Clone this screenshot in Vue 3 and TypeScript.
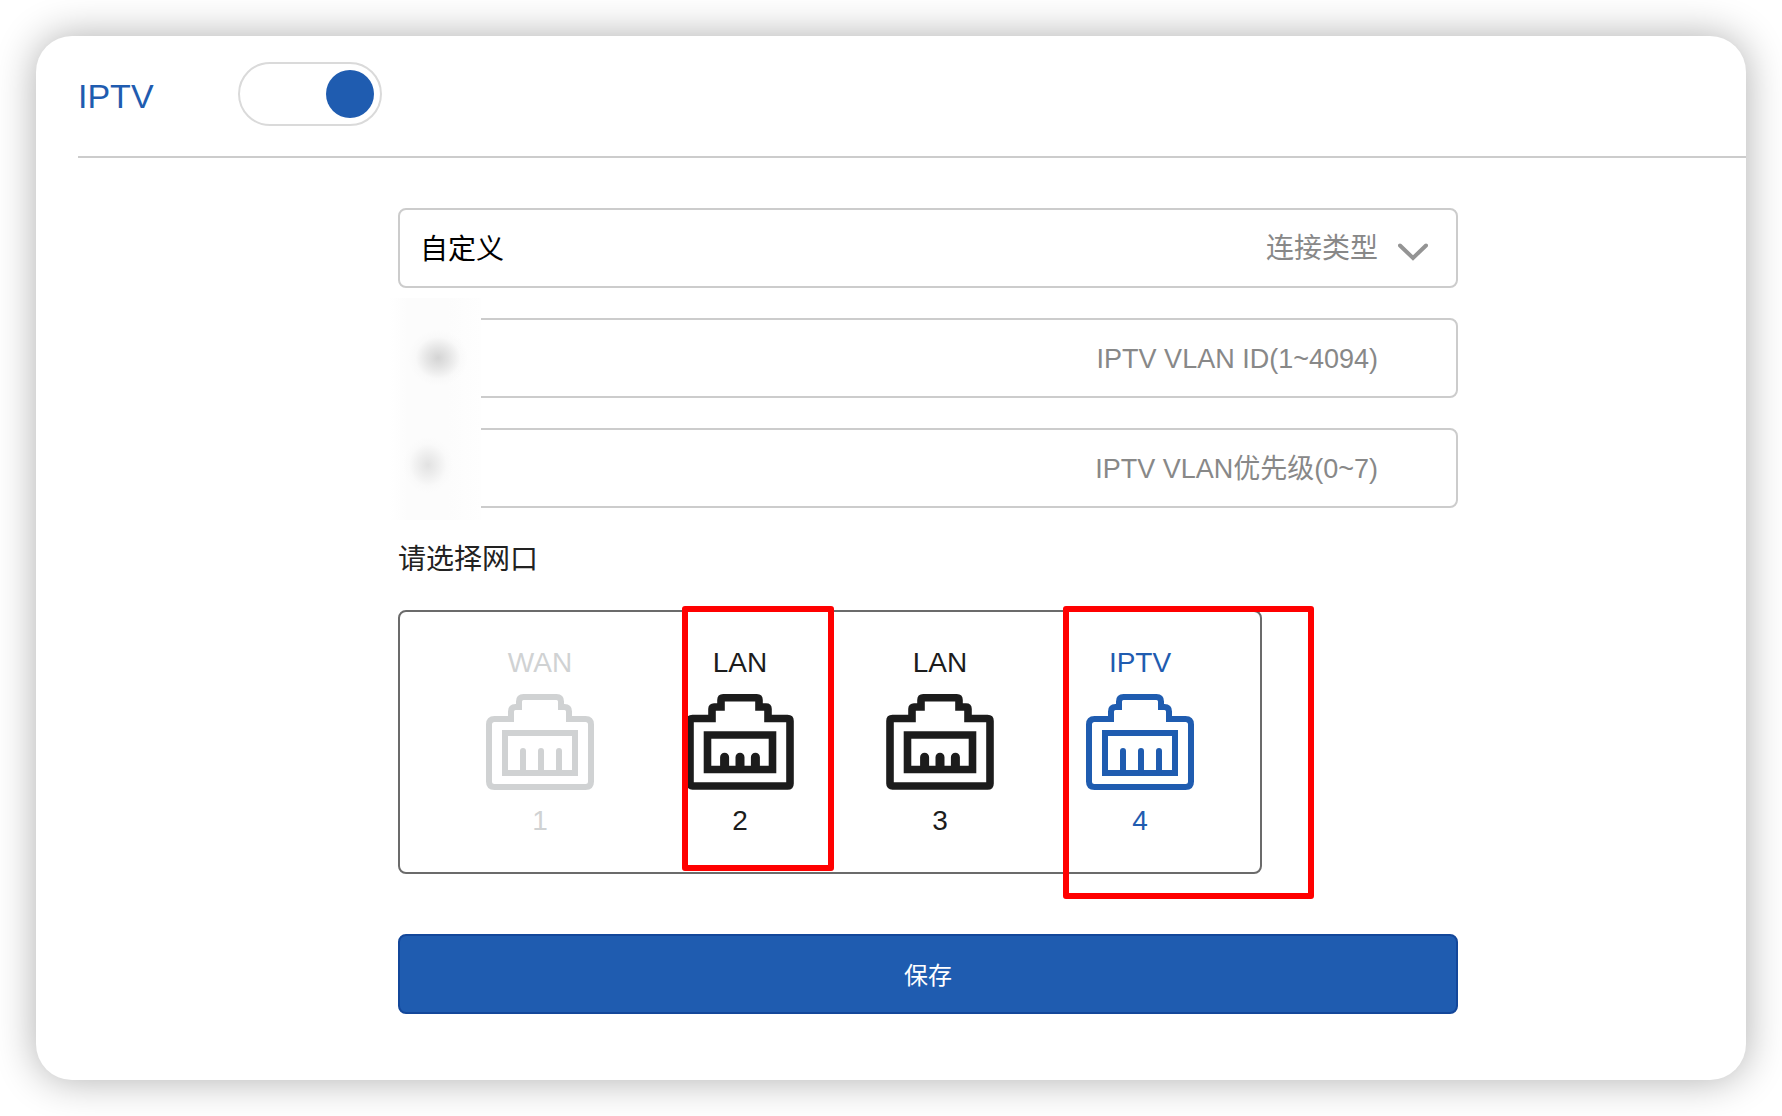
<script setup lang="ts">
import { ref } from 'vue'

interface Port {
  id: number
  label: string
  state: 'disabled' | 'normal' | 'active'
}

const enabled = ref(true)
const mode = ref('custom')
const vlanId = ref('')
const vlanPriority = ref('')

const ports: Port[] = [
  { id: 1, label: 'WAN', state: 'disabled' },
  { id: 2, label: 'LAN', state: 'normal' },
  { id: 3, label: 'LAN', state: 'normal' },
  { id: 4, label: 'IPTV', state: 'active' },
]
</script>

<template>
  <main class="card">
    <header class="head">
      <label class="title" for="iptv-switch">IPTV</label>
      <input id="iptv-switch" v-model="enabled" class="switch" type="checkbox" />
    </header>

    <form class="form" @submit.prevent>
      <div class="field">
        <select id="mode" v-model="mode" class="control">
          <option value="custom">自定义</option>
        </select>
        <label class="hint" for="mode">连接类型</label>
        <svg class="chevron" viewBox="0 0 30 18" aria-hidden="true">
          <path d="M2 2.500 L15 15 L28 2.500" />
        </svg>
      </div>

      <div class="private">
        <div class="field">
          <input id="vlan-id" v-model="vlanId" class="control" type="text" />
          <label class="hint" for="vlan-id">IPTV VLAN ID(1~4094)</label>
        </div>
        <div class="field">
          <input id="vlan-priority" v-model="vlanPriority" class="control" type="text" />
          <label class="hint" for="vlan-priority">IPTV VLAN优先级(0~7)</label>
        </div>
        <div class="mask"></div>
      </div>

      <p class="caption">请选择网口</p>

      <div class="ports">
        <button
          v-for="port in ports"
          :key="port.id"
          type="button"
          class="port"
          :class="port.state"
          :disabled="port.state === 'disabled'"
        >
          <span>{{ port.label }}</span>
          <svg v-if="port.state === 'normal'" class="jack" viewBox="0 0 108 96" aria-hidden="true">
            <path
              stroke-width="7.600"
              d="M26 24.500V15q0-2 2-2H35V6q0-2.200 2.200-2.200H70.800q2.200 0 2.200 2.200V13H80q2 0 2 2V24.500H101.500q2.500 0 2.500 2.500V89.500q0 2.500-2.500 2.500H6.500Q4 92 4 89.500V27q0-2.500 2.500-2.500Z"
            />
            <path stroke-width="7.600" d="M21.500 41H86.500V75.500H21.500Z" />
            <path stroke-width="9" stroke-linecap="round" d="M38.600 63.200V74M54 63.200V74M69.400 63.200V74" />
          </svg>
          <svg v-else class="jack" viewBox="0 0 108 96" aria-hidden="true">
            <path
              stroke-width="6"
              d="M25 25V17.500Q25 13 29.500 13H33V7.500Q33 3 37.500 3H70.500Q75 3 75 7.500V13H78.500Q83 13 83 17.500V25H99.500Q105 25 105 30.500V87.500Q105 93 99.500 93H8.500Q3 93 3 87.500V30.500Q3 25 8.500 25Z"
            />
            <path stroke-width="6" d="M19 39H89V79H19Z" />
            <path stroke-width="6" stroke-linecap="round" d="M37 57V78M55 57V78M73 57V78" />
          </svg>
          <span>{{ port.id }}</span>
        </button>
        <div class="mark mark-lan"></div>
        <div class="mark mark-iptv"></div>
      </div>

      <button class="save" type="submit">保存</button>
    </form>
  </main>
</template>

<style>
body {
  margin: 0;
  background: #fff;
}
</style>

<style scoped>
* {
  box-sizing: border-box;
}

.card {
  margin: 36px;
  padding-bottom: 66px;
  border-radius: 36px;
  background: #fff;
  box-shadow: 0 0 40px rgba(0, 0, 0, 0.32);
  font-family: 'Liberation Sans', 'Noto Sans CJK SC', sans-serif;
  color: #222;
}

.head {
  display: flex;
  align-items: center;
  margin-left: 42px;
  height: 122px;
  padding-top: 6px;
  padding-bottom: 10px;
  border-bottom: 2px solid #ccc;
}

.title {
  width: 160px;
  padding-top: 4px;
  font-size: 34px;
  line-height: 40px;
  color: #1f5cb0;
}

.switch {
  appearance: none;
  display: flex;
  align-items: center;
  justify-content: flex-end;
  width: 144px;
  height: 64px;
  margin: 0;
  padding: 6px;
  border: 2px solid #dadada;
  border-radius: 32px;
}

.switch:not(:checked) {
  justify-content: flex-start;
}

.switch::before {
  content: '';
  width: 48px;
  height: 48px;
  border-radius: 50%;
  background: #1f5cb0;
}

.form {
  padding: 50px 288px 0 362px;
}

.field {
  display: flex;
  align-items: center;
  height: 80px;
  margin-bottom: 30px;
  padding: 2px 28px 0 20px;
  border: 2px solid #ccc;
  border-radius: 8px;
}

.control {
  appearance: none;
  flex: 1;
  min-width: 0;
  height: 72px;
  padding: 0;
  border: 0;
  outline: 0;
  background: none;
  font-family: inherit;
  font-size: 28px;
  color: #000;
}

.hint {
  font-size: 27px;
  line-height: 40px;
  color: #888;
}

select ~ .hint {
  font-size: 28px;
}

input ~ .hint {
  margin-right: 50px;
}

.chevron {
  width: 30px;
  height: 18px;
  margin: 6px 0 0 20px;
  fill: none;
  stroke: #949494;
  stroke-width: 4;
  stroke-linecap: round;
}

.private {
  position: relative;
}

/* Blurred cover over the private values */
.mask {
  position: absolute;
  left: -10px;
  top: -20px;
  width: 93px;
  height: 222px;
  background:
    radial-gradient(30px 28px at 50px 60px, #d4d4d4, rgba(220, 220, 220, 0.75) 35%, rgba(242, 242, 242, 0.3) 75%, transparent),
    radial-gradient(25px 28px at 40px 167px, #e2e2e2, rgba(230, 230, 230, 0.7) 35%, rgba(244, 244, 244, 0.3) 75%, transparent),
    linear-gradient(90deg, #fff, #fcfcfc 20px, #fcfcfc 60px, #fefefe);
}

.caption {
  margin: 0;
  padding: 2px 0 30px;
  font-size: 28px;
  line-height: 40px;
}

.ports {
  position: relative;
  display: flex;
  gap: 92px;
  width: 864px;
  padding: 33px 0 33px 86px;
  border: 2px solid #6b6b6b;
  border-radius: 8px;
}

.port {
  display: flex;
  flex-direction: column;
  align-items: center;
  gap: 13px;
  width: 108px;
  padding: 0;
  border: 0;
  background: none;
  font-family: inherit;
  font-size: 28px;
  line-height: 36px;
  color: #1c1c1c;
}

.port.disabled {
  color: #d0d2d3;
}

.port.active {
  color: #1f5cb0;
}

.jack {
  width: 108px;
  height: 96px;
  fill: none;
  stroke: currentColor;
}

/* Red annotation frames lying over the port panel */
.mark {
  position: absolute;
  top: -6px;
  border: 6px solid #f00;
  border-radius: 3px;
  pointer-events: none;
}

.mark-lan {
  left: 282px;
  width: 152px;
  height: 265px;
}

.mark-iptv {
  left: 663px;
  width: 251px;
  height: 293px;
}

.save {
  display: block;
  width: 100%;
  height: 80px;
  margin-top: 60px;
  padding: 0 0 2px;
  border: 2px solid #13479a;
  border-radius: 8px;
  background: #1f5cb0;
  font-family: inherit;
  font-size: 24px;
  color: #fff;
}
</style>
